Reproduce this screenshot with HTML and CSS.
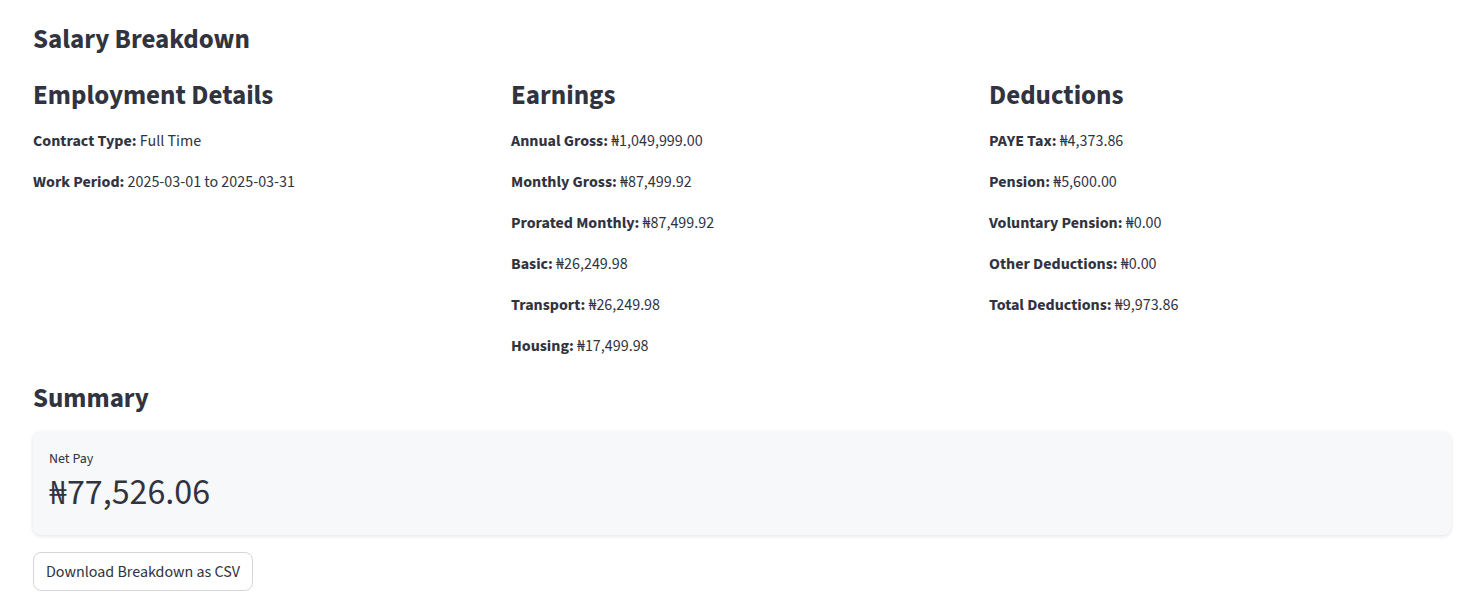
FILE: index.html
```html
<!DOCTYPE html>
<html>
<head>
<meta charset="utf-8">
<link rel="stylesheet" href="styles.css">
</head>
<body>
<main class="page">
  <h3 class="title">Salary Breakdown</h3>
  <div class="cols">
    <section class="col">
      <h2 class="heading">Employment Details</h2>
      <p class="row"><b>Contract Type:</b> Full Time</p>
      <p class="row"><b>Work Period:</b> 2025-03-01 to 2025-03-31</p>
    </section>
    <section class="col">
      <h2 class="heading">Earnings</h2>
      <p class="row"><b>Annual Gross:</b> ₦1,049,999.00</p>
      <p class="row"><b>Monthly Gross:</b> ₦87,499.92</p>
      <p class="row"><b>Prorated Monthly:</b> ₦87,499.92</p>
      <p class="row"><b>Basic:</b> ₦26,249.98</p>
      <p class="row"><b>Transport:</b> ₦26,249.98</p>
      <p class="row"><b>Housing:</b> ₦17,499.98</p>
    </section>
    <section class="col">
      <h2 class="heading">Deductions</h2>
      <p class="row"><b>PAYE Tax:</b> ₦4,373.86</p>
      <p class="row"><b>Pension:</b> ₦5,600.00</p>
      <p class="row"><b>Voluntary Pension:</b> ₦0.00</p>
      <p class="row"><b>Other Deductions:</b> ₦0.00</p>
      <p class="row"><b>Total Deductions:</b> ₦9,973.86</p>
    </section>
  </div>
  <h2 class="heading summary">Summary</h2>
  <div class="metric">
    <div class="metric-label">Net Pay</div>
    <div class="metric-value">₦77,526.06</div>
  </div>
  <div class="actions">
    <button class="btn">Download Breakdown as CSV</button>
  </div>
</main>
</body>
</html>
```
FILE: styles.css
```css
* { box-sizing: border-box; }
html, body { margin: 0; padding: 0; background: #ffffff; }
body {
  font-family: "Source Sans Pro", "Source Sans 3", Lato, "Noto Sans", "DejaVu Sans", sans-serif;
  color: #31333f;
}
.page {
  width: 1482px;
  padding: 23px 31px 0 33px;
  display: flex;
  flex-direction: column;
}
.title {
  margin: 0;
  font-size: 27px;
  line-height: 34px;
  font-weight: 700;
}
.cols {
  margin-top: 21px;
  display: grid;
  grid-template-columns: repeat(3, 1fr);
  column-gap: 16px;
}
.col { display: flex; flex-direction: column; }
.heading {
  margin: 0;
  font-size: 27px;
  line-height: 36px;
  font-weight: 700;
}
.row {
  margin: 0;
  font-size: 16px;
  line-height: 26px;
  margin-top: 15px;
}
.col .heading + .row { margin-top: 14px; }
.row b { font-weight: 700; }
.summary { margin-top: 22px; }
.metric {
  margin-top: 15px;
  background: #f7f8fa;
  border-radius: 8px;
  box-shadow: 0 1px 4px rgba(0,0,0,0.12);
  padding: 17px 16px 19px 16px;
  height: 103px;
}
.metric-label {
  font-size: 14px;
  line-height: 20px;
}
.metric-value {
  font-size: 36px;
  line-height: 44px;
  margin-top: 2px;
}
.actions { margin-top: 17px; }
.btn {
  font-family: inherit;
  font-size: 16px;
  color: #31333f;
  background: #ffffff;
  border: 1px solid #d6d6d9;
  border-radius: 8px;
  height: 39px;
  padding: 0 12px;
}
```
